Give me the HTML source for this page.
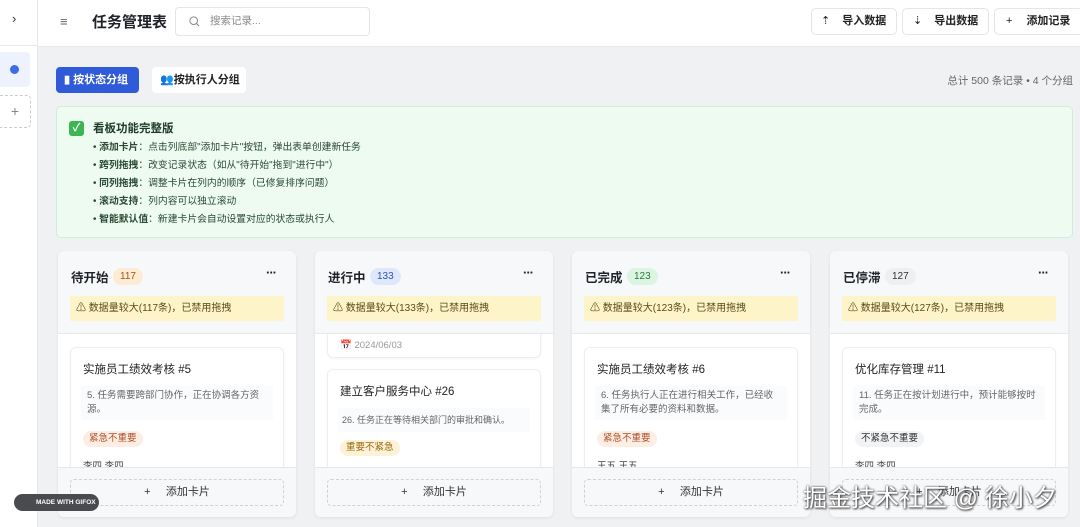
<!DOCTYPE html>
<html><head><meta charset="utf-8"><style>
*{box-sizing:border-box;margin:0;padding:0}
body{width:1080px;height:527px;overflow:hidden;background:#f0f1f3;font-family:"Liberation Sans","Noto Sans CJK SC",sans-serif;color:#1f2329;position:relative}
.abs{position:absolute}
.side{left:0;top:0;width:38px;height:527px;background:#fff;border-right:1px solid #e4e6ea}
.hdr{left:38px;top:0;width:1042px;height:47px;background:#fff;border-bottom:1px solid #e8e9ec}
.btn{position:absolute;top:8px;height:27px;background:#fff;border:1px solid #e3e5e8;border-radius:5px;font-size:11px;font-weight:bold;line-height:25px;color:#222}
.grp{position:absolute;top:67px;height:26px;border-radius:4px;font-size:11px;font-weight:bold;line-height:26px;padding-left:8px}
.col{position:absolute;top:251px;width:238px;height:266px;background:#f7f8fa;border-radius:6px;box-shadow:0 1px 3px rgba(0,0,0,.08);overflow:hidden}
.col .t{position:absolute;left:13px;top:16px;font-size:12.5px;font-weight:bold}
.badge{position:absolute;top:17px;height:17px;border-radius:9px;font-size:10px;line-height:17px;padding:0 7px}
.dots{position:absolute;right:20px;top:14px;font-size:13px;font-weight:bold;letter-spacing:-1px}
.warn{position:absolute;left:12px;right:12px;top:45px;height:25px;background:#fdf5c9;font-size:10px;line-height:25px;padding-left:6px;color:#5b4a1a}
.body{position:absolute;left:0;right:0;top:82px;height:134px;background:#fff;border-top:1px solid #e8e9ec;overflow:hidden}
.foot{position:absolute;left:0;right:0;top:216px;height:50px;background:#f7f8fa;border-top:1px solid #e6e7ea}
.add{position:absolute;left:12px;right:12px;top:11px;height:27px;border:1px dashed #cfd2d6;border-radius:4px;text-align:center;font-size:11px;line-height:25px;color:#333}
.card{position:absolute;left:12px;right:12px;background:#fff;border:1px solid #eceef0;border-radius:6px;box-shadow:0 1px 2px rgba(0,0,0,.04)}
.card .ct{position:absolute;left:12px;top:13px;font-size:11.5px;color:#222}
.card .cd{position:absolute;left:10px;right:10px;top:38px;height:34px;background:#fafbfc;font-size:9.5px;line-height:14px;color:#666;padding:3px 6px}
.tag{position:absolute;left:12px;height:16px;border-radius:8px;font-size:9.5px;line-height:16px;padding:0 6px}
.cf{position:absolute;left:12px;font-size:9.5px;color:#444}
</style></head><body>
<div class="abs side">
 <div class="abs" style="left:12px;top:11px;font-size:13px;color:#333">›</div>
 <div class="abs" style="left:0;top:45px;width:38px;border-top:1px solid #e8e9ec"></div>
 <div class="abs" style="left:0;top:52px;width:30px;height:35px;background:#eef2fc;border-radius:0 4px 4px 0"></div>
 <div class="abs" style="left:10px;top:65px;width:9px;height:9px;border-radius:50%;background:#3e6be8"></div>
 <div class="abs" style="left:0;top:95px;width:31px;height:33px;border:1px dashed #c9ccd1;border-left:none;border-radius:0 4px 4px 0;text-align:center;line-height:31px;color:#888;font-size:14px">+</div>
</div>
<div class="abs hdr">
 <div class="abs" style="left:22px;top:14px;font-size:13px;color:#666">≡</div>
 <div class="abs" style="left:54px;top:11px;font-size:15px;font-weight:bold">任务管理表</div>
 <div class="abs" style="left:137px;top:7px;width:195px;height:29px;border:1px solid #e3e5e8;border-radius:4px;font-size:10.5px;color:#888;line-height:27px;padding-left:34px">搜索记录...
  <svg class="abs" style="left:13px;top:8px" width="11" height="11" viewBox="0 0 11 11"><circle cx="4.7" cy="4.7" r="3.8" fill="none" stroke="#888" stroke-width="1"/><path d="M7.5 7.5L10 10" stroke="#888"/></svg></div>
 <div class="btn" style="left:773px;width:86px;padding-left:9px"><span style="font-weight:normal;margin-right:12px">⇡</span>导入数据</div>
 <div class="btn" style="left:864px;width:87px;padding-left:10px"><span style="font-weight:normal;margin-right:12px">⇣</span>导出数据</div>
 <div class="btn" style="left:956px;width:90px;padding-left:11px"><span style="font-weight:normal;margin-right:14px">+</span>添加记录</div>
</div>
<div class="grp" style="left:56px;width:83px;background:#2f5bd8;color:#fff">▮ 按状态分组</div>
<div class="grp" style="left:152px;width:94px;background:#fff;color:#222">👥按执行人分组</div>
<div class="abs" style="right:7px;top:73px;font-size:10.5px;color:#666">总计 500 条记录 • 4 个分组</div>
<div class="abs" style="left:56px;top:106px;width:1017px;height:132px;background:#eefbf1;border:1px solid #cfeed8;border-radius:5px">
 <div class="abs" style="left:12px;top:14px;width:15px;height:15px;background:#3cb552;border-radius:3px;color:#fff;font-size:11px;line-height:15px;text-align:center;font-weight:bold">✓</div>
 <div class="abs" style="left:36px;top:13px;font-size:11.5px;font-weight:bold;color:#1d3b26">看板功能完整版</div>
 <div class="abs" style="left:36px;top:32px;font-size:9.8px;line-height:18px;color:#2b4a33">
  • <b>添加卡片</b>：点击列底部"添加卡片"按钮，弹出表单创建新任务<br>
  • <b>跨列拖拽</b>：改变记录状态（如从"待开始"拖到"进行中"）<br>
  • <b>同列拖拽</b>：调整卡片在列内的顺序（已修复排序问题）<br>
  • <b>滚动支持</b>：列内容可以独立滚动<br>
  • <b>智能默认值</b>：新建卡片会自动设置对应的状态或执行人</div>
</div>

<div class="col" style="left:58px">
 <div class="t">待开始</div><div class="badge" style="left:55px;background:#fdebd3;color:#a05a16">117</div><div class="dots">···</div>
 <div class="warn">⚠ 数据量较大(117条)，已禁用拖拽</div>
 <div class="body"><div class="card" style="top:13px;height:140px">
  <div class="ct">实施员工绩效考核 #5</div>
  <div class="cd">5. 任务需要跨部门协作，正在协调各方资源。</div>
  <div class="tag" style="top:83px;background:#fdeee4;color:#b0502a">紧急不重要</div>
  <div class="cf" style="top:110px">李四 李四</div></div></div>
 <div class="foot"><div class="add">+&nbsp;&nbsp;&nbsp;&nbsp;&nbsp;添加卡片</div></div>
</div>
<div class="col" style="left:315px">
 <div class="t">进行中</div><div class="badge" style="left:55px;background:#dfe8fb;color:#2f56b8">133</div><div class="dots">···</div>
 <div class="warn">⚠ 数据量较大(133条)，已禁用拖拽</div>
 <div class="body"><div class="card" style="top:-20px;height:44px"><div class="cf" style="top:25px;color:#999">📅 2024/06/03</div></div>
 <div class="card" style="top:35px;height:120px">
  <div class="ct">建立客户服务中心 #26</div>
  <div class="cd" style="height:24px;white-space:nowrap;font-size:9px;line-height:18px;padding:3px 4px">26. 任务正在等待相关部门的审批和确认。</div>
  <div class="tag" style="top:70px;background:#fdf2d8;color:#9a6a12">重要不紧急</div></div></div>
 <div class="foot"><div class="add">+&nbsp;&nbsp;&nbsp;&nbsp;&nbsp;添加卡片</div></div>
</div>
<div class="col" style="left:572px">
 <div class="t">已完成</div><div class="badge" style="left:55px;background:#dcf4e2;color:#2a7a3e">123</div><div class="dots">···</div>
 <div class="warn">⚠ 数据量较大(123条)，已禁用拖拽</div>
 <div class="body"><div class="card" style="top:13px;height:140px">
  <div class="ct">实施员工绩效考核 #6</div>
  <div class="cd">6. 任务执行人正在进行相关工作，已经收集了所有必要的资料和数据。</div>
  <div class="tag" style="top:83px;background:#fdeee4;color:#b0502a">紧急不重要</div>
  <div class="cf" style="top:110px">王五 王五</div></div></div>
 <div class="foot"><div class="add">+&nbsp;&nbsp;&nbsp;&nbsp;&nbsp;添加卡片</div></div>
</div>
<div class="col" style="left:830px">
 <div class="t">已停滞</div><div class="badge" style="left:55px;background:#eeeff1;color:#333">127</div><div class="dots">···</div>
 <div class="warn">⚠ 数据量较大(127条)，已禁用拖拽</div>
 <div class="body"><div class="card" style="top:13px;height:140px">
  <div class="ct">优化库存管理 #11</div>
  <div class="cd">11. 任务正在按计划进行中，预计能够按时完成。</div>
  <div class="tag" style="top:83px;background:#f2f3f5;color:#333">不紧急不重要</div>
  <div class="cf" style="top:110px">李四 李四</div></div></div>
 <div class="foot"><div class="add">+&nbsp;&nbsp;&nbsp;&nbsp;&nbsp;添加卡片</div></div>
</div>
<div class="abs" style="left:14px;top:494px;width:85px;height:17px;background:#4a4b4e;border-radius:9px;color:#fff;font-size:6.5px;font-weight:bold;line-height:17px;padding-left:22px">MADE WITH GIFOX</div>
<div class="abs" style="left:803px;top:478px;font-size:24px;color:#fff;text-shadow:0 0 2px #444,1px 1px 2px #333;white-space:nowrap">掘金技术社区 @ 徐小夕</div>
</body></html>
